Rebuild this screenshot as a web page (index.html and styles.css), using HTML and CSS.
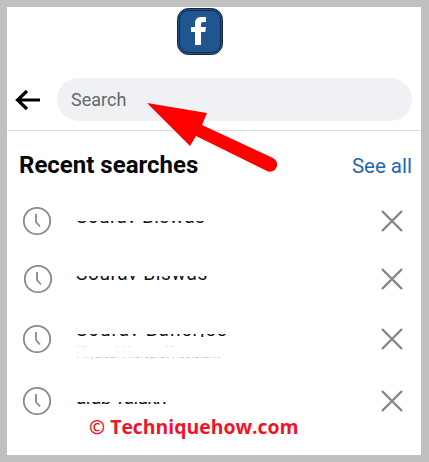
FILE: index.html
```html
<!DOCTYPE html>
<html lang="en">

<head>
	<meta charset="UTF-8" />
	<title>Search</title>
	<link rel="stylesheet" href="styles.css">
</head>

<body>
	<div class="panel">
		<div class="logo">
			<svg width="46" height="47" viewBox="0 0 46 47">
				<rect x="0.5" y="0.5" width="45" height="46" rx="11" fill="#20558f" stroke="#14243c"/>
				<rect x="2.500" y="2.500" width="41" height="42" rx="9" fill="none" stroke="#14294a" stroke-width="1"/>
				<path d="M18 37V24h-4v-5h4v-3.500C18 11 20.500 9 24.500 9H29v5h-2.500c-1.700 0-2.500.7-2.500 2.200V19h5l-.7 5H24v13z" fill="#fff"/>
			</svg>
		</div>

		<div class="search-bar">
			<svg class="back" width="26" height="22" viewBox="0 0 26 22">
				<path d="M25 11H3M12 2l-9.500 9 9.500 9" fill="none" stroke="#000" stroke-width="3.200"/>
			</svg>
			<div class="search-input">Search</div>
		</div>

		<div class="heading">
			<h2>Recent searches</h2>
			<span class="see-all">See all</span>
		</div>

		<div class="row row-1">
			<svg class="clock" width="30" height="30" viewBox="0 0 30 30"><circle cx="15" cy="15" r="13.200"/><path d="M14 8v8l4 4.500"/></svg>
			<div class="name name-1"><span>Sourav Biswas</span></div>
			<svg class="close" width="24" height="24" viewBox="0 0 24 24"><path d="M2 2l20 20M22 2L2 22"/></svg>
		</div>
		<div class="row row-2">
			<svg class="clock shifted" width="30" height="30" viewBox="0 0 30 30"><circle cx="15" cy="15" r="13.200"/><path d="M14 8v8l4 4.500"/></svg>
			<div class="name name-2"><span>Sourav Biswas</span></div>
			<svg class="close" width="24" height="24" viewBox="0 0 24 24"><path d="M2 2l20 20M22 2L2 22"/></svg>
		</div>
		<div class="row row-3">
			<svg class="clock" width="30" height="30" viewBox="0 0 30 30"><circle cx="15" cy="15" r="13.200"/><path d="M14 8v8l4 4.500"/></svg>
			<div class="details">
				<div class="name name-3"><span>Sourav Banerjee</span></div>
				<div class="sub sub-top"><span>Physical Therapy Clinic</span></div>
				<div class="sub sub-bottom"><span>Physical Therapist Assistant</span></div>
			</div>
			<svg class="close" width="24" height="24" viewBox="0 0 24 24"><path d="M2 2l20 20M22 2L2 22"/></svg>
		</div>
		<div class="row row-4">
			<svg class="clock" width="30" height="30" viewBox="0 0 30 30"><circle cx="15" cy="15" r="13.200"/><path d="M14 8v8l4 4.500"/></svg>
			<div class="name name-4"><span>arab Talukh</span></div>
			<svg class="close" width="24" height="24" viewBox="0 0 24 24"><path d="M2 2l20 20M22 2L2 22"/></svg>
		</div>

		<!-- overlays added on top of the screenshot -->
		<svg class="arrow" width="140" height="80" viewBox="0 0 140 80">
			<path d="M0 0L60 10L55 22L126 55A6.500 6.500 0 0 1 120 68L49 33L43 43Z" fill="#fe0000"/>
		</svg>
		<div class="watermark">© Techniquehow.com</div>
	</div>
</body>

</html>
```

FILE: styles.css
```css
html, body { margin: 0; padding: 0; height: 100%; }

body {
	background: #c0c0c0;
	padding: 7px 8px 7px 7px;
	box-sizing: border-box;
	font-family: Roboto, 'Liberation Sans', sans-serif;
}

.panel { position: relative; background: #fff; height: 448px; overflow: hidden; }

.logo { display: flex; justify-content: center; padding: 1px 28px 0 0; height: 47px; }

.search-bar { display: flex; align-items: center; margin-top: 23px; padding: 0 9px 9px 8px; gap: 16px; border-bottom: 1px solid #dcdcdc; }
.back { flex: none; }

.search-input {
	flex: 1; height: 43px; line-height: 43px;
	background: #f0f1f5; border-radius: 22px;
	padding-left: 14px; color: #65686c; font-size: 18px;
}

.heading { display: flex; justify-content: space-between; align-items: baseline; height: 60px; padding: 20px 9px 0 12px; box-sizing: border-box; }
.heading h2 { margin: 0; font-size: 24px; font-weight: 700; color: #080809; }
.see-all { font-size: 20.500px; color: #2467b9; }

.row { display: flex; align-items: center; padding: 0 17px 0 15px; }
.row-1 { height: 59px; }
.row-2 { height: 58px; }
.row-3 { height: 62px; }
.row-4 { height: 61px; }

.clock { flex: none; }
.clock circle, .clock path { fill: none; stroke: #8a8a8a; stroke-width: 1.800; }
.shifted { transform: translateX(1px); }
.close { flex: none; }
.close path { fill: none; stroke: #858585; stroke-width: 2.400; }

/* the names are blurred out down to a thin strip */
.name, .details { flex: 1; margin-left: 24px; align-self: flex-start; }
.name { overflow: hidden; color: #111; font-size: 19px; line-height: 22px; white-space: nowrap; }
.name span, .sub span { display: block; }
.name-1 { height: 3px; margin-top: 30px; }
.name-1 span { margin-top: -15px; letter-spacing: 0.450px; }
.name-2 { height: 5px; margin-top: 26px; }
.name-2 span { margin-top: -13px; letter-spacing: 0.650px; }
.details { margin-top: 26px; }
.details .name { margin-left: 0; }
.name-3 { height: 3px; }
.name-3 span { margin-top: -15px; letter-spacing: 1px; }
.name-4 { height: 3px; margin-top: 32px; }
.name-4 span { margin-top: -15px; letter-spacing: -0.700px; }

.sub { overflow: hidden; font-size: 11px; line-height: 14px; white-space: nowrap; }
.sub-top { height: 1px; margin-top: 9px; color: #ccc; }
.sub-top span { margin-top: -3px; letter-spacing: 0.200px; }
.sub-bottom { height: 2px; margin-top: 10px; color: #c4c4c4; }
.sub-bottom span { margin-top: -9px; letter-spacing: 0.200px; }

.arrow { position: absolute; left: 140px; top: 96px; }

.watermark {
	position: absolute; left: 82px; top: 406px;
	font-family: 'Open Sans', sans-serif; font-weight: 700; font-size: 19.400px;
	color: #f0142a; white-space: nowrap;
}
```
